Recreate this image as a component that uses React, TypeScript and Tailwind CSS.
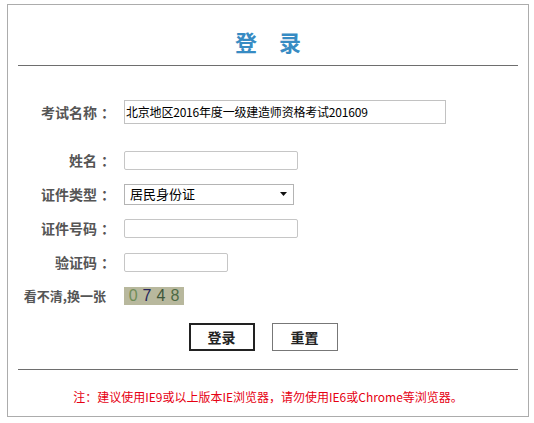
export default function App() {
  return (
    <div className="w-[534px] h-[423px] bg-white pt-[4px] pl-[7px] font-['Noto_Sans_CJK_SC',sans-serif]">
      <div className="w-[522px] h-[413px] border border-[#acacac] flex flex-col">
        {/* title */}
        <div className="pt-[25px] text-center text-[22px] leading-[22px] font-bold text-[#378bc3]">
          登　录
        </div>
        <div className="mt-[13px] mx-[10px] border-t border-[#6e6e6e]" />

        {/* form */}
        <div className="mt-[29px] flex flex-col">
          <FormRow label="考试名称">
            <div className="w-[322px] h-[24px] border border-[#c2c2c2] flex items-center pl-[1px] text-[12px] tracking-[-0.2px] text-black">
              北京地区2016年度一级建造师资格考试201609
            </div>
          </FormRow>
          <div className="h-[14px]" />
          <FormRow label="姓名">
            <input className="w-[174px] h-[19px] border border-[#c6c6c6] rounded-[2px] outline-none" />
          </FormRow>
          <FormRow label="证件类型">
            <div className="w-[170px] h-[21px] border border-[#b4b4b4] flex items-center justify-between pl-[5px] pr-[5px] text-[13px] text-black">
              <span>居民身份证</span>
              <svg width="8" height="5" viewBox="0 0 8 5">
                <path d="M0 0H7L3.5 4Z" fill="#111" />
              </svg>
            </div>
          </FormRow>
          <FormRow label="证件号码">
            <input className="w-[174px] h-[19px] border border-[#c6c6c6] rounded-[2px] outline-none" />
          </FormRow>
          <FormRow label="验证码">
            <input className="w-[104px] h-[19px] border border-[#c6c6c6] rounded-[2px] outline-none" />
          </FormRow>
          <div className="h-[34px] flex items-center">
            <div className="w-[103px] pr-[5px] text-right text-[13px] font-bold text-[#555]">看不清,换一张</div>
            <div className="ml-[13px] w-[60px] h-[18px] bg-[#b8b89d] flex items-center justify-center gap-[5px] text-[16px] leading-[18px] font-['Liberation_Sans',sans-serif]">
              <span className="text-[#6f8d58]">0</span>
              <span className="text-[#24245c]">7</span>
              <span className="text-[#3e573a]">4</span>
              <span className="text-[#4d6b45]">8</span>
            </div>
          </div>
        </div>

        {/* buttons */}
        <div className="mt-[10px] flex justify-center gap-[17px] pr-[10px]">
          <button className="w-[66px] h-[28px] border-2 border-[#222] bg-white text-[14px] font-bold text-[#222]">
            登录
          </button>
          <button className="w-[66px] h-[28px] border border-[#777] bg-white text-[14px] font-bold text-[#222]">
            重置
          </button>
        </div>

        <div className="mt-[18px] mx-[10px] border-t border-[#6e6e6e]" />
        <div className="mt-[19px] text-center text-[12px] leading-[16px] text-[#e60012]">
          注：建议使用IE9或以上版本IE浏览器，请勿使用IE6或Chrome等浏览器。
        </div>
      </div>
    </div>
  )
}

function FormRow({ label, children }: { label: string; children: React.ReactNode }) {
  return (
    <div className="h-[34px] flex items-center">
      <div className="w-[107px] text-right text-[14px] font-bold text-[#555]">
        {label}
        <span className="ml-[4px]">：</span>
      </div>
      <div className="ml-[9px]">{children}</div>
    </div>
  )
}
